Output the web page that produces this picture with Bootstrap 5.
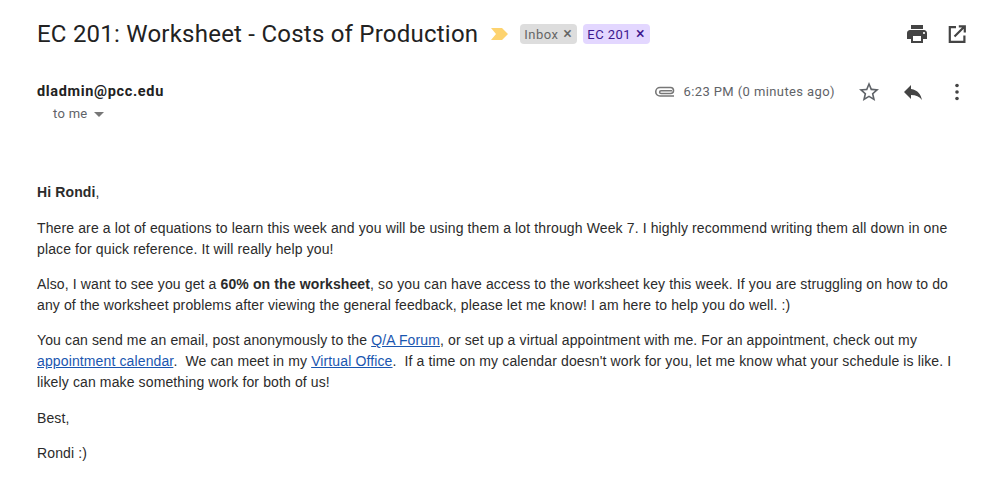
<!DOCTYPE html>
<html lang="en">
<head>
  <meta charset="UTF-8">
  <title>EC 201: Worksheet - Costs of Production</title>
  <link href="https://cdn.jsdelivr.net/npm/bootstrap@5.3.0/dist/css/bootstrap.min.css" rel="stylesheet">
  <style>
    body { background: #fff; color: #222; font-family: "Liberation Sans", Arial, sans-serif; overflow: hidden; }
    .mail-wrap { padding: 19px 0 0 37px; }
    .subject-row { height: 30px; padding-right: 17px; }
    .subject { font-family: Roboto, sans-serif; font-size: 24px; font-weight: 400; line-height: 30px; color: #222; margin: 0; letter-spacing: .23px; }
    .marker { margin-left: 13px; margin-right: 11px; }
    .tag { font-family: Roboto, sans-serif; font-size: 13px; line-height: 20px; height: 20px; padding: 0 5px 0 4px; border-radius: 4px; letter-spacing: .45px; margin-right: 6px; white-space: nowrap; }
    .tag-inbox { background: #ddd; color: #666; }
    .tag-class { background: #e3d7ff; color: #3d188e; }
    .tag b { font-weight: 500; font-size: 16px; line-height: 20px; margin-left: 5px; }
    .sender-row { margin-top: 31px; height: 24px; padding-right: 17px; }
    .sender { font-family: Roboto, sans-serif; font-weight: 700; font-size: 14.5px; color: #222; letter-spacing: .66px; }
    .sent-time { font-family: Roboto, sans-serif; font-size: 13px; color: #5f6368; letter-spacing: .4px; margin-left: 8px; margin-right: 22px; }
    .to-me { font-family: Roboto, sans-serif; font-size: 13px; color: #5f6368; margin: 0 0 0 16px; line-height: 20px; letter-spacing: .3px; }
    .caret-down { width: 0; height: 0; border-left: 5px solid transparent; border-right: 5px solid transparent; border-top: 5px solid #777; margin-left: 6px; }
    .msg { margin-top: 58.2px; padding-right: 26px; font-size: 14px; line-height: 21px; color: #2b2b2b; letter-spacing: .125px; }
    .msg p { margin: 0 0 14.4px; }
    .msg a { color: #1a56b0; }
    .act-gap { margin-left: 20px; }
  </style>
</head>
<body>
  <div class="mail-wrap">
    <!-- subject -->
    <div class="subject-row d-flex align-items-center">
      <h2 class="subject">EC 201: Worksheet - Costs of Production</h2>
      <svg class="marker" width="18" height="14" viewBox="0 0 18 14"><path d="M0 1h11l6 6-6 6H0l5-6z" fill="#fdd36f"/></svg>
      <span class="tag tag-inbox">Inbox<b>&#215;</b></span>
      <span class="tag tag-class">EC 201<b>&#215;</b></span>
      <div class="ms-auto d-flex align-items-center gap-3">
        <svg width="24" height="24" viewBox="0 0 24 24" fill="#444"><path d="M19 8H5c-1.66 0-3 1.34-3 3v6h4v4h12v-4h4v-6c0-1.66-1.34-3-3-3zm-3 11H8v-5h8v5zm3-7c-.55 0-1-.45-1-1s.45-1 1-1 1 .45 1 1-.45 1-1 1zm-1-9H6v4h12V3z"/></svg>
        <svg width="24" height="24" viewBox="0 0 24 24" fill="none" stroke="#444" stroke-width="2.2"><path d="M11 5.200H4.800v14.600h14.600V13.500"/><path d="M9.500 14.500 19 5M13.800 4.400h6v6"/></svg>
      </div>
    </div>

    <!-- sender -->
    <div class="sender-row d-flex align-items-center">
      <span class="sender">dladmin@pcc.edu</span>
      <div class="ms-auto d-flex align-items-center">
        <svg width="21" height="13" viewBox="0 0 21 13" fill="none" stroke="#777" stroke-width="1.6"><path d="M20 10H6a4 4 0 0 1 0-8.500h10.500a3 3 0 0 1 0 6H7a1.300 1.300 0 0 1 0-2.700h11"/></svg>
        <span class="sent-time">6:23 PM (0 minutes ago)</span>
        <svg width="24" height="24" viewBox="0 0 24 24" fill="#5f6368"><path d="M22 9.240l-7.190-.620L12 2 9.190 8.630 2 9.240l5.460 4.730L5.820 21 12 17.270 18.180 21l-1.630-7.030L22 9.240zM12 15.400l-3.760 2.270 1-4.280-3.320-2.880 4.380-.380L12 6.100l1.710 4.040 4.380.380-3.320 2.880 1 4.280L12 15.400z"/></svg>
        <svg class="act-gap" width="24" height="24" viewBox="0 0 24 24" fill="#444"><path d="M10 9V5l-7 7 7 7v-4.100c5 0 8.500 1.600 11 5.100-1-5-4-10-11-11z"/></svg>
        <svg class="act-gap" width="24" height="24" viewBox="0 0 24 24" fill="#444"><circle cx="12" cy="5.500" r="1.800"/><circle cx="12" cy="12" r="1.800"/><circle cx="12" cy="18.500" r="1.800"/></svg>
      </div>
    </div>
    <div class="d-flex align-items-center">
      <p class="to-me">to me</p>
      <span class="caret-down"></span>
    </div>

    <!-- body -->
    <div class="msg">
      <p><b>Hi Rondi</b>,</p>
      <p>There are a lot of equations to learn this week and you will be using them a lot through Week 7. I highly recommend writing them all down in one place for quick reference. It will really help you!</p>
      <p>Also, I want to see you get a <b>60% on the worksheet</b>, so you can have access to the worksheet key this week. If you are struggling on how to do any of the worksheet problems after viewing the general feedback, please let me know! I am here to help you do well. :)</p>
      <p>You can send me an email, post anonymously to the <a href="#">Q/A Forum</a>, or set up a virtual appointment with me. For an appointment, check out my <a href="#">appointment calendar</a>.&nbsp; We can meet in my <a href="#">Virtual Office</a>.&nbsp; If a time on my calendar doesn't work for you, let me know what your schedule is like. I likely can make something work for both of us!</p>
      <p>Best,</p>
      <p>Rondi :)</p>
    </div>
  </div>
</body>
</html>
